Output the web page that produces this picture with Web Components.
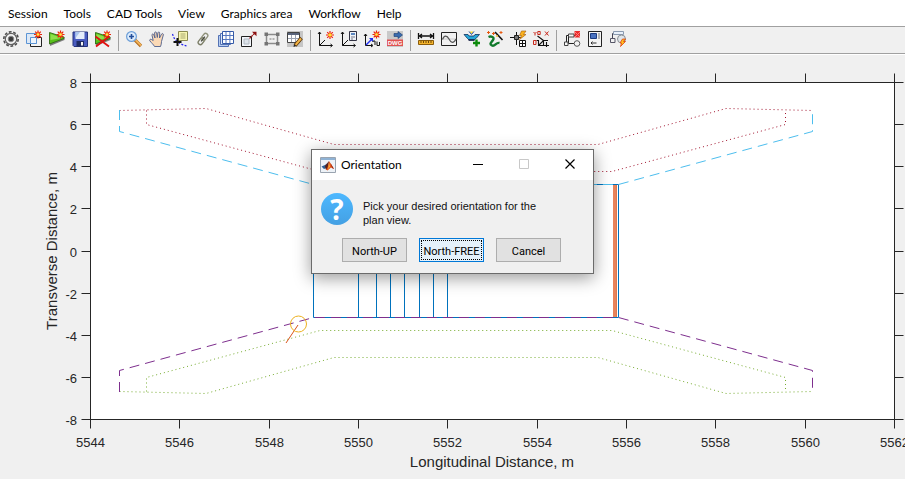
<!DOCTYPE html>
<html lang="en">
<head>
<meta charset="utf-8">
<meta name="viewport" content="width=device-width, initial-scale=1">
<title>Plan view</title>
<style>
  html, body { margin: 0; height: 100%; background: #f0f0f0; }
  body { font-family: Lato, "Open Sans", sans-serif; font-size: 12px; color: #000; }
</style>
</head>
<body>
<app-window>
  <menu-bar slot="menu">
    <menu-item>Session</menu-item>
    <menu-item>Tools</menu-item>
    <menu-item>CAD Tools</menu-item>
    <menu-item>View</menu-item>
    <menu-item>Graphics area</menu-item>
    <menu-item>Workflow</menu-item>
    <menu-item>Help</menu-item>
  </menu-bar>
  <tool-bar slot="tools">
    <tool-group>
      <tool-button icon="gear" label="Settings"></tool-button>
      <tool-button icon="newview" label="New view"></tool-button>
      <tool-button icon="open" label="New run"></tool-button>
      <tool-button icon="save" label="Save"></tool-button>
      <tool-button icon="discard" label="Delete run"></tool-button>
    </tool-group>
    <tool-group>
      <tool-button icon="zoom" label="Zoom in"></tool-button>
      <tool-button icon="hand" label="Pan"></tool-button>
      <tool-button icon="datatip" label="Data cursor"></tool-button>
      <tool-button icon="link" label="Link"></tool-button>
      <tool-button icon="tables" label="Tables"></tool-button>
      <tool-button icon="resize" label="Resize"></tool-button>
      <tool-button icon="frame" label="Fit frame"></tool-button>
      <tool-button icon="edit" label="Edit table"></tool-button>
    </tool-group>
    <tool-group>
      <tool-button icon="axesnew" label="New axes"></tool-button>
      <tool-button icon="axescalc" label="Compute axes"></tool-button>
      <tool-button icon="axesvec" label="Vector axes"></tool-button>
      <tool-button icon="dwg" label="Export drawing"></tool-button>
    </tool-group>
    <tool-group>
      <tool-button icon="ruler" label="Measure"></tool-button>
      <tool-button icon="sine" label="Profile"></tool-button>
      <tool-button icon="basin" label="Add basin"></tool-button>
      <tool-button icon="river" label="River wizard"></tool-button>
      <tool-button icon="cross" label="Quick point"></tool-button>
      <tool-button icon="yox" label="Axes labels"></tool-button>
    </tool-group>
    <tool-group>
      <tool-button icon="flow" label="New process"></tool-button>
      <tool-button icon="report" label="Report"></tool-button>
      <tool-button icon="run" label="Run process"></tool-button>
    </tool-group>
  </tool-bar>
  <plan-chart></plan-chart>
  <question-dialog slot="dialog" heading="Orientation">
    Pick your desired orientation for the plan view.
    <dialog-button slot="actions">North-UP</dialog-button>
    <dialog-button slot="actions" default>North-FREE</dialog-button>
    <dialog-button slot="actions">Cancel</dialog-button>
  </question-dialog>
</app-window>

<script>
const define = (name, render) => customElements.define(name, class extends HTMLElement {
  constructor() { super(); this.attachShadow({ mode: "open" }); }
  connectedCallback() { this.shadowRoot.innerHTML = render(this); }
});

define("app-window", () => `
  <style>
    :host { display: flex; flex-direction: column; min-height: 100%; }
    main { position: relative; flex: 1; overflow: hidden; }
    .overlay { position: absolute; inset: 0; display: flex; justify-content: center; align-items: flex-start; padding-top: 94px; }
  </style>
  <slot name="menu"></slot>
  <slot name="tools"></slot>
  <main><slot></slot><div class="overlay"><slot name="dialog"></slot></div></main>`);

define("menu-bar", () => `
  <style>
    :host { display: block; background: #fff; border-bottom: 1px solid #a0a0a0; }
    nav { display: flex; height: 26px; align-items: stretch; }
  </style>
  <nav><slot></slot></nav>`);

define("menu-item", () => `
  <style>
    :host { display: flex; }
    button { border: 0; background: none; color: inherit; font: inherit; padding: 0 8px; white-space: nowrap; }
  </style>
  <button type="button"><slot></slot></button>`);

define("tool-bar", () => `
  <style>
    :host { display: flex; height: 26px; background: #f0f0f0; border-bottom: 1px solid #a0a0a0; box-shadow: 0 1px #fff; margin-bottom: 1px; overflow-x: clip; }
  </style>
  <slot></slot>`);

define("tool-group", () => `
  <style>
    :host { display: flex; align-items: flex-start; padding-top: 1px; }
    :host(:not(:last-child))::after { content: ""; width: 1px; height: 21px; margin: 2px 4px 0 3px; background: #a0a0a0; }
  </style>
  <slot></slot>`);

const burst = (x, y) => {
  let rays = "";
  for (let i = 0; i < 8; i++) {
    const a = i * Math.PI / 4;
    rays += `M${x} ${y}L${(x + 4 * Math.cos(a)).toFixed(1)} ${(y + 4 * Math.sin(a)).toFixed(1)}`;
  }
  return `<path d="${rays}" stroke="#e8200c" stroke-width="1.2"/><circle cx="${x}" cy="${y}" r="2.3" fill="#f54b12"/><circle cx="${x}" cy="${y}" r="1.3" fill="#ffe94a"/>`;
};
const play = `<path d="M1 2.5V15L15.5 9V6z" fill="#7d7d7d"/><path d="M.5 1.5V13L15 7.5V6.2z" fill="#58c01c" stroke="#2f6b12" stroke-width=".9"/><path d="M1.5 3V9L13 7z" fill="#8fe04a"/>`;
const axes = `<path d="M2.5 1V14.5H15M1 3L2.5 1L4 3M13.5 13L15.5 14.5L13.5 16M2.5 14.5L8 9" stroke="#111" fill="none"/>`;
const ICONS = {
  gear: `<circle cx="8" cy="8" r="7.200" fill="none" stroke="#4c4c4c" stroke-width="1.600" stroke-dasharray="2.800 1.700"/><circle cx="8" cy="8" r="5.700" fill="#f2f2f2" stroke="#606060" stroke-width="1.200"/><circle cx="8" cy="8" r="2.800" fill="#3a3a3a" stroke="#8a8a8a"/>`,
  newview: `<path d="M4.500 6.500H15.500V15.500H4.500z" fill="#f4f4f4" stroke="#222"/><path d="M.5 2.500H10.500V12.500H.5z" fill="#d6e6f8" fill-opacity=".75" stroke="#5b94d4"/><path d="M4.500 6.500H10.500V12.500H4.500z" fill="#eef5fd" stroke="#5b94d4"/>${burst(12, 3.5)}`,
  open: play + burst(11.5, 3.5),
  save: `<path d="M1 1H15.500V15.500H2L1 14.500z" fill="#4a5cc0" stroke="#24327c"/><path d="M3.500 1H12.500V8H3.500z" fill="#e4ecfa"/><path d="M3.500 1H8L3.500 7z" fill="#a9c4ee"/><path d="M4.500 10H12V15.500H4.500z" fill="#1f2b63"/><path d="M9 11H11V14.500H9z" fill="#f4f4f4"/>`,
  discard: play + burst(12, 3.5) + `<path d="M.5 5.500L14 15.500M14 5.500L1 15.500" stroke="#e01010" stroke-width="1.800"/>`,
  zoom: `<path d="M9 9L15 15" stroke="#b06a1c" stroke-width="3.2"/><path d="M9.500 9L15 14.500" stroke="#f1b259" stroke-width="1.8"/><circle cx="5.500" cy="5.500" r="4.900" fill="#dcebfb" stroke="#6d9fd8" stroke-width="1.200"/><path d="M5.500 3V8M3 5.500H8" stroke="#234f9c" stroke-width="1.600"/>`,
  hand: `<path d="M4.200 9.500L3 4.200C2.700 2.800 4.400 2.500 4.800 3.800L6 7L5.600 2C5.600.6 7.300.6 7.600 1.900L8.300 6.500L8.900 1.800C9.200.5 10.800.8 10.700 2.100L10.500 7L12.500 3.200C13.200 2 14.800 2.700 14.300 4L12.500 10.500C12.500 12.500 12 14 11.500 15.500H5.500C4.500 13.500 2.500 12 .8 9.800C.2 8.600 1.500 7.800 2.500 8.500z" fill="#fbd9b5" stroke="#4c5c8a" stroke-width=".9"/>`,
  datatip: `<path d="M6.500.5H15.500V9.500H9L6.500 10V8z" fill="#f7f5b0" stroke="#8a8a50"/><path d="M8.500 3H13.500M8.500 5H13.500M8.500 7H13.500" stroke="#a9a870"/><path d="M.5 3C2 8 4 12 16 15.500" stroke="#2222ee" stroke-width="1.200" stroke-dasharray="2 1.500" fill="none"/><path d="M5.500 7V15M1.500 11H9.500" stroke="#111" stroke-width="2"/>`,
  link: `<g transform="rotate(-52 8 8)" fill="none"><rect x="1.500" y="5.800" width="7.500" height="4.400" rx="2.200" stroke="#7b7d66" stroke-width="1.300"/><rect x="7" y="5.800" width="7.500" height="4.400" rx="2.200" stroke="#8f917a" stroke-width="1.300"/><path d="M5 8H11" stroke="#44463a" stroke-width="1.300"/></g>`,
  tables: `<path d="M.5 4.500H10.500V15.500H.5z" fill="#b6cdf0" stroke="#5472b4"/><path d="M2.500 2.500H12.500V13.500H2.500z" fill="#dce8fa" stroke="#5472b4"/><path d="M4.500.5H15.500V12.500H4.500z" fill="#fff" stroke="#355aa8"/><path d="M8 1V12M11.900 1V12M5 4.500H15M5 8.500H15" stroke="#5678c0"/>`,
  resize: `<path d="M.5 5.500H10.500V15.500H.5z" fill="#f2f5fa" stroke="#222"/><path d="M3 8H8V13H3z" fill="#dde3ea" stroke="#b0b8c0"/><path d="M8.500 7.500L14 2" stroke="#a01818" stroke-width="1.300" stroke-dasharray="2 .6"/><path d="M11 .8H15.500V5.300z" fill="#8c1010"/>`,
  frame: `<path d="M2.500 3.500H13.500V12.500H2.500z" fill="#efefef" stroke="#8a8a8a" stroke-width="1.500"/><path d="M.5 1.500h3.500v3.500H.5zM12 1.500h3.500v3.500H12zM.5 11h3.500v3.500H.5zM12 11h3.500v3.500H12z" fill="#747474"/><path d="M5.500 8H7.500M8.500 8H10.500" stroke="#777"/>`,
  edit: `<path d="M0 0H16V16H0z" fill="#c6c6c6"/><path d="M.5 1.500H12.500V11.500H.5z" fill="#fff" stroke="#444"/><path d="M1 2H12V4H1z" fill="#58637a"/><path d="M4.500 4V11M8.500 4V11M1 7.500H12" stroke="#9aa2b2"/><path d="M8 14.500L14.500 7" stroke="#5d3b12" stroke-width="3.600"/><path d="M8.600 13.800L14 7.500" stroke="#f5b544" stroke-width="2"/><path d="M6.500 16L7 13.500L9 15z" fill="#222"/>`,
  axesnew: `<g transform="translate(-1)">${axes}</g><path d="M12 0V8M8 4H16M9.200 1.200L14.800 6.800M14.800 1.200L9.200 6.800" stroke="#f02010" stroke-width="1.200"/><circle cx="12" cy="4" r="1.800" fill="#ffe030"/>`,
  axescalc: `<g transform="translate(-1)">${axes}</g><path d="M8.500.5H15.500V9.500H8.500z" fill="#eef2f8" stroke="#334"/><path d="M10 2H14V4H10z" fill="#5b86c0"/><path d="M10 6H14M10 8H12" stroke="#778"/>`,
  axesvec: `<path d="M1.500 3V14.500H8M0 5L1.500 3L3 5M7 13L9 14.500L7 16" stroke="#111" fill="none"/><path d="M2 14L8 8" stroke="#2030f0" stroke-width="1.400"/><path d="M5 7H9V11z" fill="#2030f0"/>${burst(12.5, 3.5)}<path d="M9 11V10L11 10V14M13 10.500V14.500H15.500V11" stroke="#111" fill="none"/>`,
  dwg: `<path d="M0 0H16V16H0z" fill="#c9c9c9"/><path d="M7 2.500H11V.5L15.500 4L11 7.500V5.500H7z" fill="#3a6cae" stroke="#173a70" stroke-width=".6"/><path d="M0 8.500H16V15H0z" fill="#e05252"/><text x="8" y="14" text-anchor="middle" fill="#fff" font-family="Liberation Sans, sans-serif" font-size="6" font-weight="700">DWG</text>`,
  ruler: `<path d="M.5 2V8M15.500 2V8M1 5H15M4 3L1.500 5L4 7M12 3L14.500 5L12 7" stroke="#111" stroke-width="1.300" fill="none"/><path d="M.5 9.500H15.500V13.500H.5z" fill="#f5b52c" stroke="#8a5c0c"/><path d="M3 10V12M5.500 10V12M8 10V12M10.500 10V12M13 10V12" stroke="#6e4808"/>`,
  sine: `<path d="M.5 1.500H15.500V14.500H.5z" fill="#f1f1f1" stroke="#222"/><path d="M1 8H15" stroke="#ccc"/><path d="M1.500 8.500C3 4 6 4 8 8S12.500 13 15 8" fill="none" stroke="#555" stroke-width="1.200"/>`,
  basin: `<path d="M0 3.500H4L5 5H10L11 3.500H15.500L12 7.500L10 9H5L3.500 7.500z" fill="#25a7d8" stroke="#10305c" stroke-width=".8"/><path d="M4.500 9H10.500" stroke="#101840" stroke-width="1.500"/><path d="M5 .5L7.500 3.500L10 .5" fill="#ffe030" stroke="#1b4fd0"/><path d="M12.500 8.500V15.500M9 12H16" stroke="#0c8a0c" stroke-width="2.400"/>`,
  river: `<path d="M1.500 6C4 5 8 6 6 9S2 13 5 14.500S9 11 12.500 12" fill="none" stroke="#117a2c" stroke-width="2.400"/><path d="M8 1L15.500 9" stroke="#111" stroke-width="1.600"/><path d="M1.500 0v3M0 1.500h3M6.500 1v3M5 2.500h3M14 0v3M12.500 1.500h3" stroke="#e85a10"/><circle cx="10" cy="5" r="1" fill="#f0c030"/>`,
  cross: `<path d="M6.500 1V14M0 6.500H12" stroke="#111"/><path d="M4.500 4.500H8.500V8.500H4.500z" fill="#777" stroke="#222"/><path d="M11.500 0H16L13.500 3.500H16L9.500 8.500L11.500 4.500H9.500z" fill="#fbb21c" stroke="#a0580c" stroke-width=".6"/><path d="M9.500 9.500H15.500V15.500H9.500zM12.500 9.500V15.500M9.500 12.500H15.500" stroke="#111" fill="#fff"/>`,
  yox: `<path d="M3.500 9.500H5.500V14.500H16M5.500 14.500L10.500 9.500H15M10.500 9.500V14.500M13.500 11V16M4.500 5L10.500 9.500" stroke="#111" stroke-width="1.100" fill="none"/><path d="M.5 1L2 2.500L3.500 1M2 2.500V4.500M.5 9.500h2.500v4H.5zM4.800 .5h2.400v3H4.800zM12 .5L15.500 4.500M15.500.5L12 4.500" stroke="#c8281c" fill="none"/>`,
  flow: `<path d="M2.500 12V4.500H11M4.500 4.500V12.500H10" stroke="#222" fill="none"/><path d="M4.500 3H10V6H4.500zM.5 11H4V14.500H.5z" fill="#f8f8f8" stroke="#444"/><circle cx="13" cy="12.500" r="2.800" fill="#f2f2f2" stroke="#555"/><path d="M10.500 0H16V6.500H10.500z" fill="#ea2c2c"/><path d="M11 1L16 6M16 1L11 6" stroke="#ff7d7d"/>`,
  report: `<path d="M1.500.5H14.500V15.500H1.500z" fill="#f4f4f4" stroke="#222"/><path d="M3.500 2.500H9.500V7.500H3.500z" fill="#4a72c0" stroke="#1c3c80"/><path d="M11 3H13M11 5H13M11 7H13" stroke="#777"/><path d="M4 12H9.500M5.500 10.500L4 12L5.500 13.500" stroke="#333" fill="none"/>`,
  run: `<path d="M2.500 8V2.500H13" stroke="#445" fill="none"/><path d="M3.500.5H13.500V3.500H3.500z" fill="#e8f0fa" stroke="#8a9ab0"/><path d="M.5 7.500H5V11.500H.5z" fill="#f2f2f2" stroke="#556"/><circle cx="11.500" cy="8" r="4" fill="#dfe5ea" stroke="#8a9096"/><path d="M12.500 8H15.500L13.500 10.500H15.500L10.500 15.500L11.500 12H10z" fill="#ffc21c" stroke="#e0400c" stroke-width=".8"/>`
};

define("tool-button", el => `
  <style>
    :host { display: block; }
    button { display: block; border: 0; background: none; padding: 0 4px 0 3px; width: 23px; height: 22px; }
    svg { display: block; width: 16px; height: 16px; overflow: visible; }
  </style>
  <button type="button" aria-label="${el.getAttribute("label")}"><svg viewBox="0 0 16 16" fill="none" aria-hidden="true">${ICONS[el.getAttribute("icon")]}</svg></button>`);

/* Axes box in drawing units; the data range maps linearly on to it. */
const BOX = { l: 90.5, r: 894.5, t: 82.5, b: 419.5 };
define("plan-chart", () => {
  let ticks = "", labels = "";
  for (let i = 0; i <= 9; i++) {
    const x = Math.floor(BOX.l + i * (BOX.r - BOX.l) / 9) + .5;
    ticks += `M${x} ${BOX.t}v-9M${x} ${BOX.b}v9`;
    labels += `<text x="${x}" y="447" text-anchor="middle">${5544 + 2 * i}</text>`;
  }
  for (let i = 0; i <= 8; i++) {
    const y = Math.floor(BOX.t + i * (BOX.b - BOX.t) / 8) + .5;
    ticks += `M${BOX.l} ${y}h-9M${BOX.r} ${y}h9`;
    labels += `<text x="77" y="${y + 5.500}" text-anchor="end">${8 - 2 * i}</text>`;
  }
  const joints = [358.5, 376.5, 390.5, 404.5, 419.5, 433.5, 447.5].map(x => `M${x} 184.500V317.500`).join("");
  return `
  <style>
    :host { display: block; }
    svg { display: block; width: 100%; height: auto; font-family: "Liberation Sans", Arial, sans-serif; font-size: 13px; fill: #262626; }
    .title { font-size: 15px; }
    .line { fill: none; stroke-width: 1; }
    .dash { stroke-dasharray: 10 6; }
    .dot { stroke-dasharray: 1 3; }
  </style>
  <svg viewBox="0 55 905 424" role="img" aria-label="Plan view of the structure">
    <rect x="${BOX.l}" y="${BOX.t}" width="${BOX.r - BOX.l}" height="${BOX.b - BOX.t}" fill="#fff" stroke="#262626"/>
    <path class="line" stroke="#262626" d="${ticks}"/>
    <path class="line dot" stroke="#a2142f" d="M119.500 110.500L206 108.500L334 144.500H598L726 108.500L812.500 110.500M146.500 110.500V124.500L320 171.500H612L785.500 124.500V110.500"/>
    <path class="line dot" stroke="#77ac30" d="M119.500 391.500L206 393.500L334 357.500H598L726 393.500L812.500 391.500M146.500 391.500V377.500L320 330.500H612L785.500 377.500V391.500"/>
    <path fill="#e8845c" d="M613 185H617V317H613z"/>
    <path class="line" stroke="#dd7850" d="M616.500 185V317"/>
    <path class="line" stroke="#0072bd" d="M313.500 184.500H618.500V317.500H313.500z${joints}"/>
    <path class="line dash" stroke="#4dbeee" d="M119.500 110V131.500L313.500 184.500H618.500L812.500 131.500V110"/>
    <path class="line dash" stroke="#7e2f8e" d="M119.500 392V370.500L313.500 317.500H618.500L812.500 370.500V392"/>
    <path class="line" stroke="#d95319" d="M298 325L286 343"/>
    <circle class="line" cx="298.500" cy="324" r="8" stroke="#edb120"/>
    ${labels}
    <text class="title" x="492" y="467" text-anchor="middle">Longitudinal Distance, m</text>
    <text class="title" transform="translate(57 251) rotate(-90)" text-anchor="middle">Transverse Distance, m</text>
  </svg>`;
});

define("question-dialog", el => `
  <style>
    :host { display: block; box-sizing: border-box; width: 283px; max-width: 100%; background: #f0f0f0; border: 1px solid #6b6b6b; box-shadow: 0 4px 16px rgba(0,0,0,.4); }
    header { display: flex; align-items: center; height: 30px; background: #fff; padding-left: 8px; }
    h1 { flex: 1; margin: 0 0 0 5px; padding-bottom: 2px; font: inherit; }
    header button { display: grid; place-items: center; width: 46px; height: 30px; padding: 0 0 2px; border: 0; background: none; }
    .content { display: flex; gap: 10px; padding: 13px 40px 0 9px; }
    .badge { flex: none; display: grid; place-items: center; width: 32px; height: 32px; border-radius: 50%; background: linear-gradient(#4db8ff, #44a0e3); color: #fff; font: bold 28px/32px "Open Sans", sans-serif; }
    p { margin: 6px 0 0; font: 11px/14px "Liberation Sans", Arial, sans-serif; color: #111; }
    footer { display: flex; gap: 12px; padding: 11px 30px; }
  </style>
  <section role="dialog" aria-label="${el.getAttribute("heading")}">
    <header>
      <svg width="16" height="16" viewBox="0 0 16 16" aria-hidden="true"><path d="M.5.5H15.500V15.500H.5z" fill="#edf2f7" stroke="#9aa4b0"/><path d="M1 1H15V3H1z" fill="#8fb2d4"/><path d="M1.500 9.500L5 8L7 6.500L6.500 11L4 12z" fill="#2b5d94"/><path d="M5 9L9 4L8 12L6 13z" fill="#5a2018"/><path d="M9 4L11 7L14 12L11 10.500L7.500 13.500L6 12.500C8 11 8.500 7 9 4z" fill="#e2571a"/><path d="M9 6L10 9.500L8 12.500z" fill="#f8b13c"/><path d="M10.500 6L14 12L12 11z" fill="#9c2412"/></svg>
      <h1>${el.getAttribute("heading")}</h1>
      <button type="button" aria-label="Minimize"><svg width="10" height="11"><path d="M0 5.500H10" stroke="#000"/></svg></button>
      <button type="button" aria-label="Maximize" disabled><svg width="10" height="10"><path d="M.5.5H9.500V9.500H.5z" fill="none" stroke="#c8c8c8"/></svg></button>
      <button type="button" aria-label="Close"><svg width="10" height="10"><path d="M.5.5L9.500 9.500M9.500.5L.5 9.500" stroke="#000" stroke-width="1.200"/></svg></button>
    </header>
    <div class="content"><span class="badge" aria-hidden="true">?</span><p><slot></slot></p></div>
    <footer><slot name="actions"></slot></footer>
  </section>`);

define("dialog-button", () => `
  <style>
    :host { display: block; }
    button { box-sizing: border-box; width: 65px; height: 24px; padding: 2px 0 0; border: 1px solid #adadad; background: #e1e1e1; color: #000; font: 11px Roboto, "Open Sans", sans-serif; white-space: nowrap; }
    :host([default]) button { border-color: #0078d7; background: #e5f1fb; outline: 1px dotted #000; outline-offset: -3px; }
  </style>
  <button type="button"><slot></slot></button>`);
</script>
</body>
</html>
